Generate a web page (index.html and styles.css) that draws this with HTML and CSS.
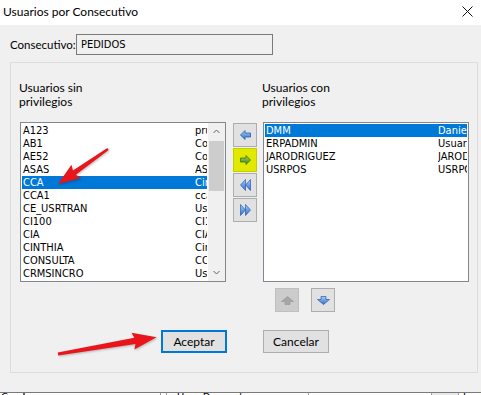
FILE: index.html
```html
<!DOCTYPE html>
<html lang="es">
<head>
    <meta charset="UTF-8">
    <title>Usuarios por Consecutivo</title>
    <link rel="stylesheet" href="styles.css">
</head>
<body>
<div class="window">
    <!-- Barra de titulo -->
    <div class="titlebar">
        <span class="title">Usuarios por Consecutivo</span>
        <svg class="close" width="11" height="11" viewBox="0 0 11 11">
            <path d="M0.5 0.5 L10.5 10.5 M10.5 0.5 L0.5 10.5" stroke="#111" stroke-width="1"/>
        </svg>
    </div>

    <div class="dialog">
        <div class="consec-row">
            <span class="consec-label">Consecutivo:</span>
            <div class="field">PEDIDOS</div>
        </div>

        <div class="group">
            <div class="columns">
                <div class="caption">Usuarios sin<br>privilegios</div>
                <div></div>
                <div class="caption">Usuarios con<br>privilegios</div>

                <!-- Lista izquierda -->
                <div class="listbox">
                    <div class="list-body">
                        <div class="row"><span class="code">A123</span><span class="name">prueba</span></div>
                        <div class="row"><span class="code">AB1</span><span class="name">Contabilidad</span></div>
                        <div class="row"><span class="code">AE52</span><span class="name">Compras</span></div>
                        <div class="row"><span class="code">ASAS</span><span class="name">ASAS</span></div>
                        <div class="row selected"><span class="code">CCA</span><span class="name">Cinthia Castro</span></div>
                        <div class="row"><span class="code">CCA1</span><span class="name">cca1</span></div>
                        <div class="row"><span class="code">CE_USRTRAN</span><span class="name">Usuario transferencias</span></div>
                        <div class="row"><span class="code">CI100</span><span class="name">CI100</span></div>
                        <div class="row"><span class="code">CIA</span><span class="name">CIA</span></div>
                        <div class="row"><span class="code">CINTHIA</span><span class="name">Cinthia</span></div>
                        <div class="row"><span class="code">CONSULTA</span><span class="name">CONSULTA</span></div>
                        <div class="row"><span class="code">CRMSINCRO</span><span class="name">Usuario CRM</span></div>
                    </div>
                    <div class="scrollbar">
                        <div class="sb-arrow">
                            <svg width="7" height="5" viewBox="0 0 7 5"><path d="M0.5 4 L3.5 1 L6.5 4" fill="none" stroke="#606060"/></svg>
                        </div>
                        <div class="sb-track"><div class="sb-thumb"></div></div>
                        <div class="sb-arrow">
                            <svg width="7" height="5" viewBox="0 0 7 5"><path d="M0.5 1 L3.5 4 L6.5 1" fill="none" stroke="#606060"/></svg>
                        </div>
                    </div>
                </div>

                <!-- Botones para mover -->
                <div class="move-buttons">
                    <div class="icon-btn">
                        <svg width="11" height="10" viewBox="0 0 11 10">
                            <defs>
                                <linearGradient id="blue" x1="0" y1="0" x2="0" y2="1">
                                    <stop offset="0" stop-color="#a9cdf5"/>
                                    <stop offset="1" stop-color="#2f6fd0"/>
                                </linearGradient>
                                <linearGradient id="green" x1="0" y1="0" x2="0" y2="1">
                                    <stop offset="0" stop-color="#a6d65a"/>
                                    <stop offset="1" stop-color="#3f8a12"/>
                                </linearGradient>
                            </defs>
                            <path d="M0.5 5 L5 0.5 V3 H10.5 V7 H5 V9.5 Z" fill="url(#blue)" stroke="#2a5cab" stroke-width="0.8"/>
                        </svg>
                    </div>
                    <div class="icon-btn highlight">
                        <svg width="11" height="10" viewBox="0 0 11 10">
                            <path d="M10.5 5 L6 0.5 V3 H0.5 V7 H6 V9.5 Z" fill="url(#green)" stroke="#3a6d12" stroke-width="0.8"/>
                        </svg>
                    </div>
                    <div class="icon-btn">
                        <svg width="11" height="12" viewBox="0 0 11 12">
                            <path d="M5.5 0.5 L0.5 6 L5.5 11.5 Z M10.5 0.5 L5.5 6 L10.5 11.5 Z" fill="url(#blue)" stroke="#2a5cab" stroke-width="0.7"/>
                        </svg>
                    </div>
                    <div class="icon-btn">
                        <svg width="11" height="12" viewBox="0 0 11 12">
                            <path d="M0.5 0.5 L5.5 6 L0.5 11.5 Z M5.5 0.5 L10.5 6 L5.5 11.5 Z" fill="url(#blue)" stroke="#2a5cab" stroke-width="0.7"/>
                        </svg>
                    </div>
                </div>

                <!-- Lista derecha -->
                <div class="right-col">
                    <div class="listbox">
                        <div class="list-body">
                            <div class="row selected"><span class="code">DMM</span><span class="name">Daniel Martinez</span></div>
                            <div class="row"><span class="code">ERPADMIN</span><span class="name">Usuario administrador</span></div>
                            <div class="row"><span class="code">JARODRIGUEZ</span><span class="name">JARODRIGUEZ</span></div>
                            <div class="row"><span class="code">USRPOS</span><span class="name">USRPOS</span></div>
                        </div>
                    </div>
                    <div class="order-buttons">
                        <div class="icon-btn disabled">
                            <svg width="13" height="9" viewBox="0 0 13 9">
                                <path d="M6.5 0.5 L12.5 5.5 H9 V8.5 H4 V5.5 H0.5 Z" fill="#a6a6a6" stroke="#9a9a9a" stroke-width="0.7"/>
                            </svg>
                        </div>
                        <div class="icon-btn">
                            <svg width="13" height="9" viewBox="0 0 13 9">
                                <path d="M6.5 8.5 L12.5 3.5 H9 V0.5 H4 V3.5 H0.5 Z" fill="url(#blue)" stroke="#2a5cab" stroke-width="0.7"/>
                            </svg>
                        </div>
                    </div>
                </div>
            </div>

            <div class="actions">
                <button class="btn default">Aceptar</button>
                <button class="btn">Cancelar</button>
            </div>
        </div>
    </div>

    <!-- Grilla de la ventana de atras -->
    <div class="grid-strip">
        <span class="cell c1">Co</span>
        <span class="cell c2"></span>
        <span class="cell c3"></span>
        <span class="cell c4">Usar Despachos</span>
        <span class="cell c5"></span>
        <span class="cell c6"></span>
        <span class="cell c7">Inven</span>
    </div>

    <!-- Flechas rojas de anotacion -->
    <svg class="annotations" width="481" height="395" viewBox="0 0 481 395">
        <polygon transform="translate(108 149) rotate(145)" points="0,-1.2 41,-2.6 39,-8 61,0 39,8 41,2.6 0,1.2" fill="#e8161b"/>
        <polygon transform="translate(58 354) rotate(-9.7)" points="0,-1.5 78,-3.2 76,-8.5 100,0 76,8.5 78,3.2 0,1.5" fill="#e8161b"/>
    </svg>
</div>
</body>
</html>
```

FILE: styles.css
```css
body {
    margin: 0;
    padding: 0;
    background-color: #f0f0f0;
    font-family: Lato, "Liberation Sans", sans-serif;
    font-size: 12px;
    color: #000;
    overflow: hidden;
}

.window {
    position: relative;
    width: 481px;
    height: 395px;
    overflow: hidden;
}

/* Barra de titulo */
.titlebar {
    height: 25px;
    background-color: #fff;
    display: flex;
    align-items: center;
    justify-content: space-between;
    padding: 0 8px 2px 3px;
    box-sizing: border-box;
}

.title {
    font-size: 12px;
}

.dialog {
    height: 367px;
    padding: 9px 0 0 10px;
    box-sizing: border-box;
}

.consec-row {
    display: flex;
    align-items: center;
    height: 21px;
}

.consec-label {
    width: 66px;
    font-size: 11.5px;
    white-space: nowrap;
}

.field {
    width: 197px;
    height: 21px;
    box-sizing: border-box;
    border: 1px solid #7a7a7a;
    background-color: #f0f0f0;
    padding: 3px 0 0 4px;
    font-family: "DejaVu Sans Condensed", "DejaVu Sans", sans-serif;
    font-stretch: condensed;
    font-size: 11px;
}

/* Marco del grupo */
.group {
    margin-top: 7px;
    width: 468px;
    height: 311px;
    box-sizing: border-box;
    border: 1px solid #dcdcdc;
    padding: 18px 0 0 9px;
}

.columns {
    display: grid;
    grid-template-columns: 206px 37px 206px;
}

.caption {
    margin-left: -1px;
    margin-bottom: 13px;
    line-height: 14px;
}

.listbox {
    height: 160px;
    box-sizing: border-box;
    border: 1px solid #828790;
    background-color: #fff;
    display: flex;
}

.list-body {
    flex: 1;
    padding: 1px;
    overflow: hidden;
    font-family: "DejaVu Sans Condensed", "DejaVu Sans", sans-serif;
    font-stretch: condensed;
    font-size: 11px;
}

.row {
    display: flex;
    height: 13px;
    line-height: 13px;
    padding-left: 1px;
    white-space: nowrap;
    overflow: hidden;
}

.row.selected {
    background-color: #0078d7;
    color: #fff;
}

.code {
    width: 172px;
    flex-shrink: 0;
}

.name {
    overflow: hidden;
}

/* Barra de desplazamiento */
.scrollbar {
    width: 17px;
    display: flex;
    flex-direction: column;
    background-color: #f0f0f0;
}

.sb-arrow {
    height: 17px;
    display: flex;
    align-items: center;
    justify-content: center;
}

.sb-track {
    flex: 1;
    padding: 1px 1px 0 1px;
}

.sb-thumb {
    height: 50px;
    background-color: #cdcdcd;
}

/* Botones de iconos */
.move-buttons {
    margin: 1px 0 0 7px;
    display: flex;
    flex-direction: column;
    gap: 1px;
}

.icon-btn {
    width: 24px;
    height: 24px;
    box-sizing: border-box;
    border: 1px solid #adadad;
    background-color: #e1e1e1;
    display: flex;
    align-items: center;
    justify-content: center;
}

.icon-btn.highlight {
    background-color: #e2e900;
    border-color: #c7cc00;
}

.icon-btn.disabled {
    background-color: #cccccc;
    border-color: #bfbfbf;
}

.order-buttons {
    display: flex;
    gap: 12px;
    margin: 6px 0 0 12px;
}

/* Botones Aceptar / Cancelar */
.actions {
    display: flex;
    gap: 36px;
    margin: 18px 0 0 141px;
}

.btn {
    width: 66px;
    height: 23px;
    padding: 0;
    border: 1px solid #adadad;
    background-color: #e1e1e1;
    font-family: Lato, "Liberation Sans", sans-serif;
    font-size: 12px;
    color: #000;
}

.btn.default {
    border: 2px solid #0078d7;
}

/* Grilla de atras */
.grid-strip {
    display: flex;
    height: 3px;
    border-top: 1px solid #7a7a7a;
    background-color: #fff;
    overflow: hidden;
    font-family: "DejaVu Sans Condensed", "DejaVu Sans", sans-serif;
    font-size: 11px;
    line-height: 9px;
}

.cell {
    border-left: 1px solid #a0a0a0;
    box-sizing: border-box;
    padding-left: 4px;
    white-space: nowrap;
    overflow: hidden;
}

.c1 { width: 23px; border-left: none; padding-left: 1px; }
.c2 { width: 137px; border-left: 2px solid #606060; }
.c3 { width: 6px; }
.c4 { width: 142px; padding-left: 10px; }
.c5 { width: 123px; }
.c6 { width: 27px; background-color: #e8e8e8; }
.c7 { flex: 1; }

.annotations {
    position: absolute;
    top: 0;
    left: 0;
    pointer-events: none;
    filter: drop-shadow(1px 1px 1px rgba(0, 0, 0, 0.25));
}
```
